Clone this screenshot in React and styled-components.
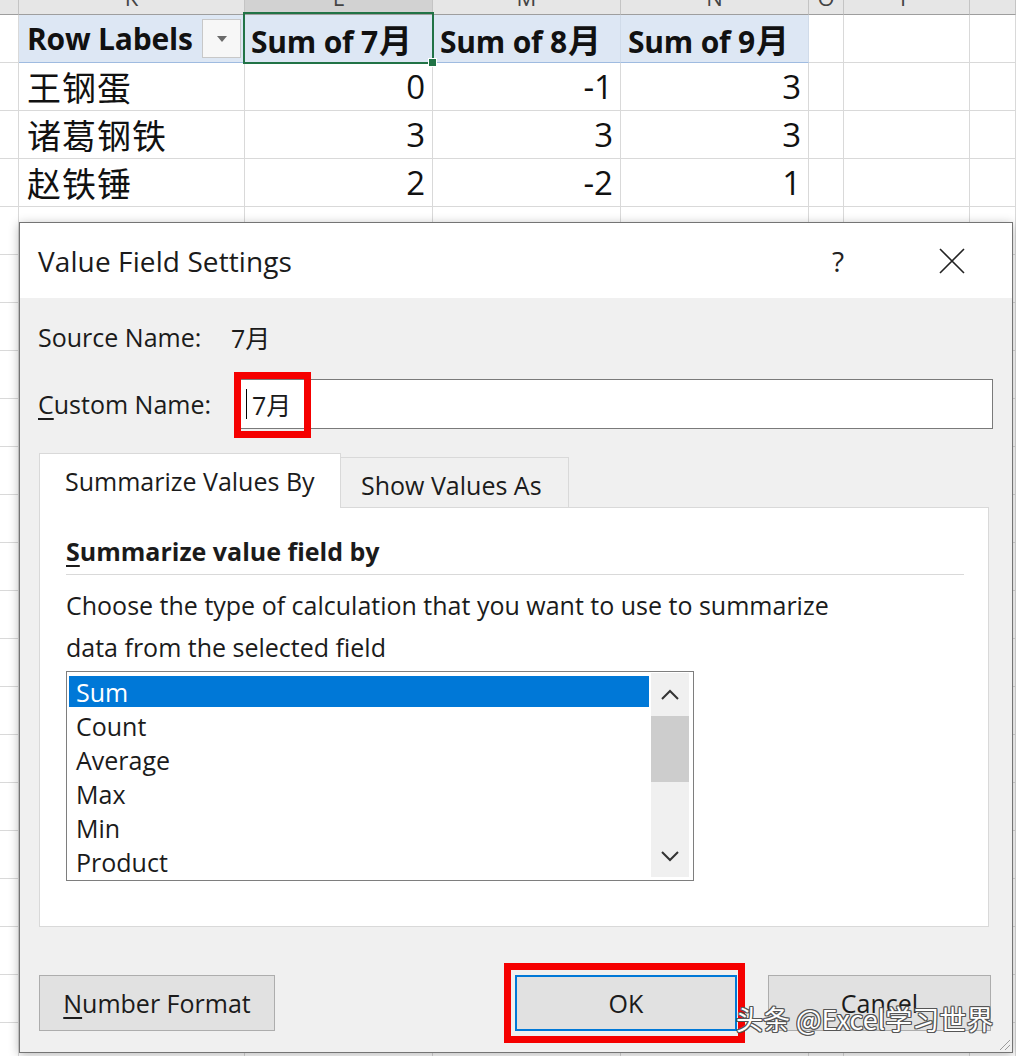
import styled, { createGlobalStyle } from "styled-components";

const GlobalStyle = createGlobalStyle`
  html, body {
    margin: 0;
    padding: 0;
    background: #ffffff;
    overflow: hidden;
  }
  * {
    box-sizing: border-box;
  }
`;

const Page = styled.div`
  position: relative;
  width: 1016px;
  height: 1056px;
  overflow: hidden;
  background: #ffffff;
  font-family: "Open Sans", "Noto Sans CJK SC", sans-serif;
  color: #111111;
`;

/* ---------- spreadsheet behind the dialog ---------- */

const Sheet = styled.div`
  display: grid;
  grid-template-columns: 19px 226px 188px 188px 188px 35px 126px 1fr;
  grid-template-rows: 15px;
  grid-auto-rows: 48px;
`;

const ColHead = styled.div`
  display: flex;
  align-items: flex-end;
  justify-content: center;
  overflow: hidden;
  background: ${(p) => (p.$active ? "#d2d2d2" : "#e6e6e6")};
  border-right: 1px solid #c4c4c4;
  border-bottom: 1px solid #9e9e9e;
  color: #444444;
  font-size: 22px;
  line-height: 1;
  span {
    margin-bottom: 6px;
  }
`;

const Cell = styled.div`
  position: relative;
  display: flex;
  align-items: center;
  justify-content: ${(p) => (p.$right ? "flex-end" : "flex-start")};
  padding: 0 7px 0 ${(p) => p.$pl || 7}px;
  border-right: 1px solid ${(p) => (p.$pivot ? "#d0dbe9" : "#d9d9d9")};
  border-bottom: 1px solid ${(p) => (p.$pivot ? "#9fbbe0" : "#d9d9d9")};
  background: ${(p) => (p.$pivot ? "#dde7f4" : "#ffffff")};
  white-space: nowrap;
`;

const HeadText = styled.span`
  font-family: "Open Sans", "Noto Sans CJK SC", sans-serif;
  font-weight: 700;
  font-size: 30px;
  letter-spacing: -0.2px;
  b {
    font-family: "Noto Sans CJK SC", sans-serif;
    font-size: 33px;
    font-weight: 700;
    margin-left: 1px;
  }
`;

const NameText = styled.span`
  font-family: "Noto Sans CJK SC", sans-serif;
  font-size: 34px;
  letter-spacing: 1px;
`;

const NumText = styled.span`
  font-family: "Open Sans", sans-serif;
  font-size: 33px;
`;

const FilterButton = styled.div`
  margin-left: auto;
  margin-right: -4px;
  width: 39px;
  height: 39px;
  display: flex;
  align-items: center;
  justify-content: center;
  background: #f7f7f7;
  border: 1px solid #c8c8c8;
  &::after {
    content: "";
    border-left: 5px solid transparent;
    border-right: 5px solid transparent;
    border-top: 6px solid #6a6a6a;
  }
`;

const Selection = styled.div`
  position: absolute;
  z-index: 2;
  top: -3px;
  left: -2px;
  right: -2px;
  bottom: -2px;
  border: 2px solid #217346;
  pointer-events: none;
  &::after {
    content: "";
    position: absolute;
    right: -5px;
    bottom: -5px;
    width: 7px;
    height: 7px;
    background: #217346;
    border: 1px solid #ffffff;
  }
`;

/* ---------- dialog ---------- */

const Dialog = styled.div`
  position: absolute;
  left: 19px;
  top: 222px;
  width: 994px;
  height: 831px;
  display: flex;
  flex-direction: column;
  background: #f0f0f0;
  border: 1px solid #747474;
  box-shadow: 0 2px 10px rgba(0, 0, 0, 0.28);
  font-family: "Open Sans", "Noto Sans CJK SC", sans-serif;
  color: #1b1b1b;
`;

const TitleBar = styled.div`
  height: 75px;
  flex: none;
  display: flex;
  align-items: center;
  padding: 0 30px 0 18px;
  background: #ffffff;
`;

const Title = styled.div`
  font-size: 28px;
  letter-spacing: 0.1px;
`;

const TitleActions = styled.div`
  margin-left: auto;
  display: flex;
  gap: 54px;
`;

const TitleButton = styled.div`
  width: 60px;
  height: 40px;
  display: flex;
  align-items: center;
  justify-content: center;
  font-size: 28px;
  color: #222222;
`;

const Body = styled.div`
  flex: 1;
  display: flex;
  flex-direction: column;
  padding: 0 19px 0 18px;
  font-size: 25px;
`;

const FieldRow = styled.div`
  height: 50px;
  margin-top: ${(p) => p.$mt}px;
  display: flex;
  align-items: center;
`;

const Label = styled.div`
  width: ${(p) => p.$w}px;
  flex: none;
  u {
    text-decoration: underline;
    text-underline-offset: 4px;
  }
`;

const TextBox = styled.div`
  position: relative;
  flex: 1;
  height: 50px;
  display: flex;
  align-items: center;
  padding-left: 5px;
  background: #ffffff;
  border: 1px solid #7a7a7a;
`;

const Caret = styled.span`
  width: 1px;
  height: 30px;
  background: #000000;
  margin-right: 5px;
`;

const RedMark = styled.div`
  position: absolute;
  pointer-events: none;
  border: 7px solid #f50000;
  left: ${(p) => p.$l}px;
  top: ${(p) => p.$t}px;
  width: ${(p) => p.$w}px;
  height: ${(p) => p.$h}px;
`;

const TabBar = styled.div`
  margin: 24px 4px 0 1px;
  display: flex;
  align-items: flex-end;
`;

const Tab = styled.div`
  position: relative;
  z-index: ${(p) => (p.$active ? 1 : 0)};
  width: ${(p) => p.$w}px;
  height: ${(p) => (p.$active ? 55 : 50)}px;
  margin-bottom: ${(p) => (p.$active ? -1 : 0)}px;
  display: flex;
  align-items: center;
  padding-left: ${(p) => (p.$active ? 25 : 20)}px;
  padding-top: ${(p) => (p.$active ? 0 : 4)}px;
  background: ${(p) => (p.$active ? "#ffffff" : "#f0f0f0")};
  border: 1px solid #d9d9d9;
  border-bottom: none;
  border-left: ${(p) => (p.$active ? "1px solid #d9d9d9" : "none")};
`;

const Panel = styled.div`
  margin: 0 4px 0 1px;
  height: 420px;
  display: flex;
  flex-direction: column;
  padding: 0 24px 0 26px;
  background: #ffffff;
  border: 1px solid #d9d9d9;
`;

const Heading = styled.div`
  margin-top: 26px;
  height: 34px;
  line-height: 34px;
  font-weight: 700;
  font-size: 25px;
  u {
    text-decoration: underline;
    text-underline-offset: 4px;
  }
`;

const Rule = styled.div`
  height: 1px;
  margin-top: 6px;
  background: #d9d9d9;
`;

const Description = styled.p`
  margin: 9px 0 0;
  line-height: 42px;
  width: 790px;
`;

const ListBox = styled.div`
  margin-top: 3px;
  width: 628px;
  height: 210px;
  display: flex;
  padding: 1px 4px 3px 2px;
  border: 1px solid #7e7e7e;
  background: #ffffff;
`;

const Items = styled.div`
  flex: 1;
  padding-top: 2px;
  overflow: hidden;
`;

const Item = styled.div`
  height: 34px;
  display: flex;
  align-items: center;
  padding-left: 7px;
  background: ${(p) => (p.$selected ? "#0078d7" : "transparent")};
  color: ${(p) => (p.$selected ? "#ffffff" : "#1b1b1b")};
  border-top: ${(p) => (p.$selected ? "1px solid #ffffff" : "none")};
  border-bottom: ${(p) => (p.$selected ? "2px solid #ffffff" : "none")};
`;

const ScrollBar = styled.div`
  width: 38px;
  margin-left: 2px;
  display: flex;
  flex-direction: column;
  align-items: center;
  background: #f0f0f0;
`;

const ArrowBox = styled.div`
  height: 43px;
  width: 100%;
  display: flex;
  align-items: center;
  justify-content: center;
`;

const Thumb = styled.div`
  width: 100%;
  height: 66px;
  background: #cdcdcd;
`;

const Track = styled.div`
  flex: 1;
`;

const ButtonRow = styled.div`
  margin: 48px 2px 0 1px;
  display: flex;
  align-items: center;
`;

const Button = styled.div`
  position: relative;
  width: ${(p) => p.$w}px;
  height: 56px;
  margin-left: ${(p) => p.$ml || 0}px;
  display: flex;
  align-items: center;
  justify-content: center;
  background: #e1e1e1;
  border: ${(p) => (p.$default ? "2px solid #0078d7" : "1px solid #adadad")};
  u {
    text-decoration: underline;
    text-underline-offset: 4px;
  }
`;

const Grip = styled.svg`
  position: absolute;
  right: 1px;
  bottom: 1px;
`;

const Watermark = styled.div`
  position: absolute;
  left: 736px;
  top: 999px;
  font-family: "Noto Sans CJK SC", sans-serif;
  font-size: 27px;
  color: #ffffff;
  text-shadow: 1px 1px 0 #555, -1px -1px 0 #555, 1px -1px 0 #555,
    -1px 1px 0 #555, 0 1px 0 #555, 1px 0 0 #555, 0 -1px 0 #555,
    -1px 0 0 #555;
  pointer-events: none;
`;

// the last column runs past the window edge, so its letter is off-screen
const columns = ["", "K", "L", "M", "N", "O", "P", ""];
const months = ["7", "8", "9"];
const people = [
  ["王钢蛋", [0, -1, 3]],
  ["诸葛钢铁", [3, 3, 3]],
  ["赵铁锤", [2, -2, 1]],
];
const functions = ["Sum", "Count", "Average", "Max", "Min", "Product"];

function Chevron({ up }) {
  return (
    <svg width="20" height="12" viewBox="0 0 20 12">
      <path
        d={up ? "M2 10 L10 2 L18 10" : "M2 2 L10 10 L18 2"}
        fill="none"
        stroke="#333"
        strokeWidth="2"
      />
    </svg>
  );
}

function EmptyRow() {
  return columns.map((c, i) => <Cell key={i} />);
}

export default function App() {
  return (
    <Page>
      <GlobalStyle />
      <Sheet>
        {columns.map((c, i) => (
          <ColHead key={c + i} $active={c === "L"}>
            <span>{c}</span>
          </ColHead>
        ))}

        <Cell />
        <Cell $pivot $pl={8}>
          <HeadText>Row Labels</HeadText>
          <FilterButton />
        </Cell>
        {months.map((m, i) => (
          <Cell key={m} $pivot $pl={i === 0 ? 6 : 7}>
            <HeadText>
              Sum of {m}
              <b>月</b>
            </HeadText>
            {i === 0 && <Selection />}
          </Cell>
        ))}
        <Cell />
        <Cell />
        <Cell />

        {people.map(([name, values]) => [
          <Cell key={name + "a"} />,
          <Cell key={name} $pl={8}>
            <NameText>{name}</NameText>
          </Cell>,
          ...values.map((v, i) => (
            <Cell key={name + i} $right>
              <NumText>{v}</NumText>
            </Cell>
          )),
          <Cell key={name + "o"} />,
          <Cell key={name + "p"} />,
          <Cell key={name + "q"} />,
        ])}

        {Array.from({ length: 18 }, (_, r) => (
          <EmptyRow key={r} />
        ))}
      </Sheet>

      <Dialog>
        <TitleBar>
          <Title>Value Field Settings</Title>
          <TitleActions>
            <TitleButton>?</TitleButton>
            <TitleButton>
              <svg width="26" height="26" viewBox="0 0 26 26">
                <path d="M1 1 L25 25 M25 1 L1 25" stroke="#222" strokeWidth="1.6" />
              </svg>
            </TitleButton>
          </TitleActions>
        </TitleBar>

        <Body>
          <FieldRow $mt={14}>
            <Label $w={193}>Source Name:</Label>
            <span>7月</span>
          </FieldRow>

          <FieldRow $mt={17}>
            <Label $w={202}>
              <u>C</u>ustom Name:
            </Label>
            <TextBox>
              <Caret />
              <span>7月</span>
              <RedMark $l={-7} $t={-8} $w={77} $h={66} />
            </TextBox>
          </FieldRow>

          <TabBar>
            <Tab $active $w={302}>Summarize Values By</Tab>
            <Tab $w={228}>Show Values As</Tab>
          </TabBar>
          <Panel>
            <Heading>
              <u>S</u>ummarize value field by
            </Heading>
            <Rule />
            <Description>
              Choose the type of calculation that you want to use to summarize
              data from the selected field
            </Description>
            <ListBox>
              <Items>
                {functions.map((f, i) => (
                  <Item key={f} $selected={i === 0}>
                    {f}
                  </Item>
                ))}
              </Items>
              <ScrollBar>
                <ArrowBox>
                  <Chevron up />
                </ArrowBox>
                <Thumb />
                <Track />
                <ArrowBox>
                  <Chevron />
                </ArrowBox>
              </ScrollBar>
            </ListBox>
          </Panel>

          <ButtonRow>
            <Button $w={236}>
              <u>N</u>umber Format
            </Button>
            <Button $w={222} $ml={240} $default>
              OK
              <RedMark $l={-13} $t={-14} $w={241} $h={80} />
            </Button>
            <Button $w={223} $ml={31}>
              Cancel
            </Button>
          </ButtonRow>
        </Body>

        <Grip width="14" height="14" viewBox="0 0 14 14">
          <path d="M13 3 L3 13 M13 8 L8 13" stroke="#9a9a9a" strokeWidth="1" />
        </Grip>
      </Dialog>

      <Watermark>头条 @Excel学习世界</Watermark>
    </Page>
  );
}
